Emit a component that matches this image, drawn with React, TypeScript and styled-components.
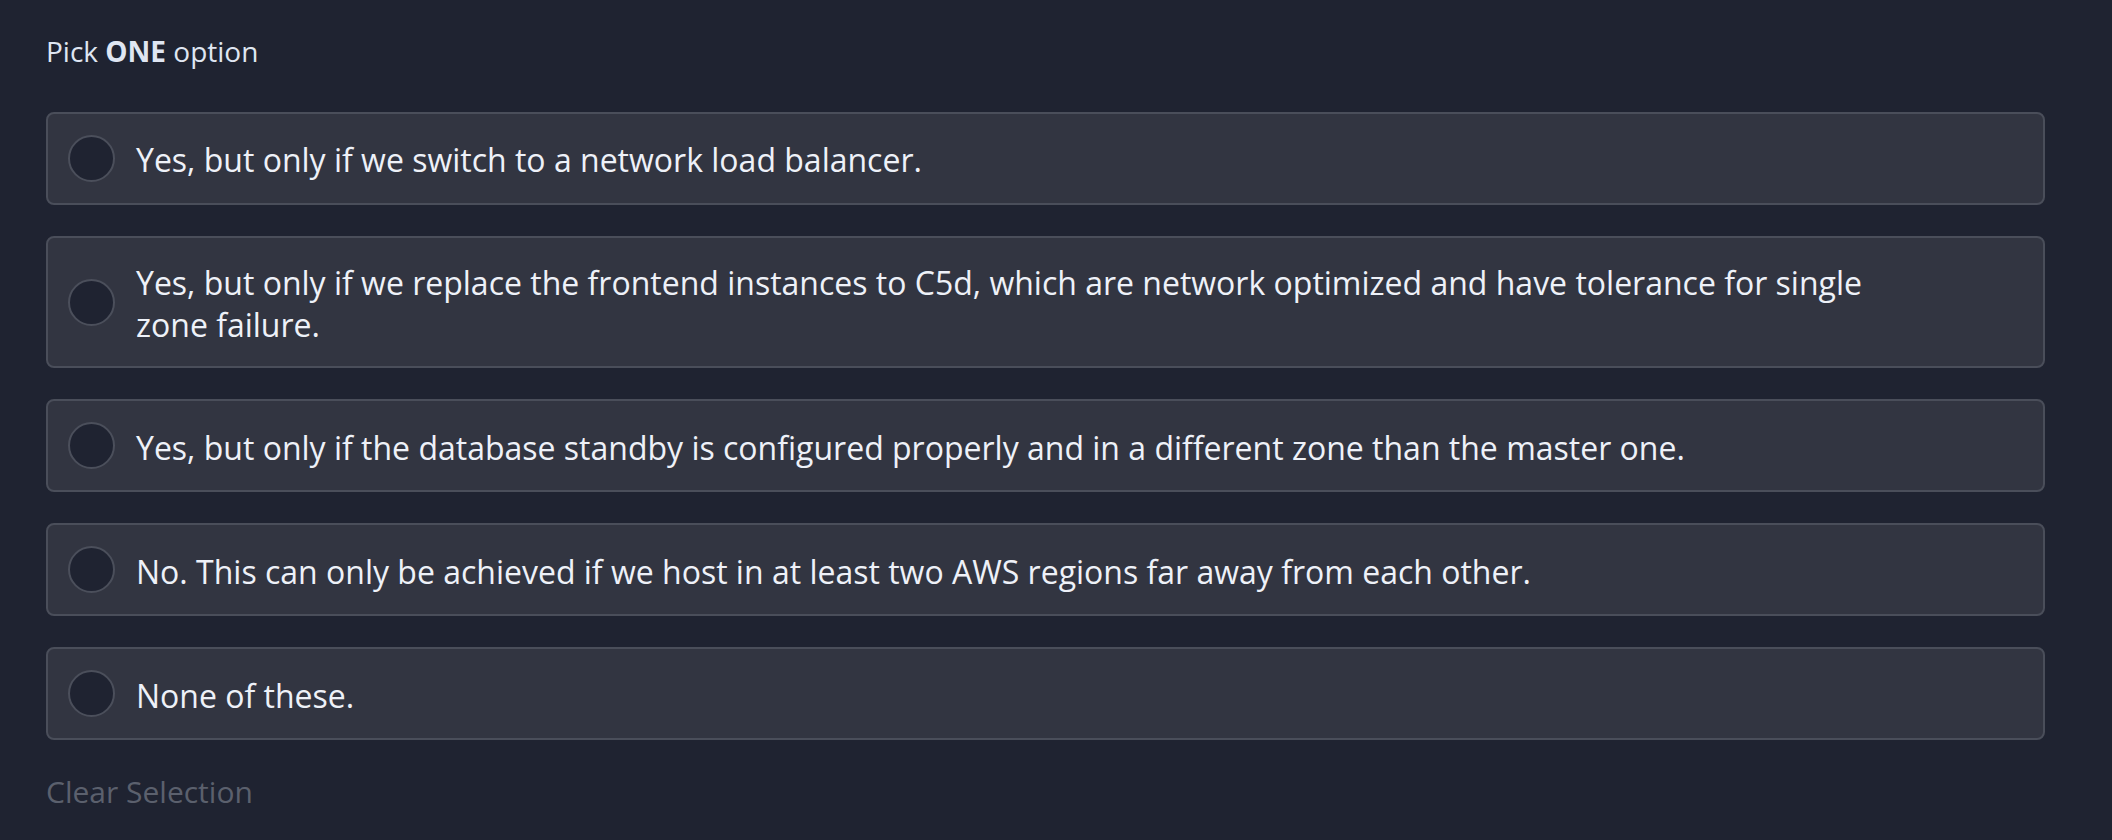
import styled, { createGlobalStyle } from 'styled-components';

const GlobalStyle = createGlobalStyle`
  html, body {
    margin: 0;
    padding: 0;
    background: #1f2331;
  }
  body {
    font-family: 'Open Sans', 'Noto Sans', sans-serif;
  }
`;

const Page = styled.div`
  padding: 32px 67px 40px 46px;
  min-height: 840px;
  box-sizing: border-box;
`;

const Prompt = styled.p`
  margin: 0 0 41px;
  font-size: 28px;
  line-height: 1.4;
  color: #dfe6f2;

  b {
    font-weight: 700;
  }
`;

const OptionList = styled.div`
  display: flex;
  flex-direction: column;
  gap: 31px;
`;

const Option = styled.label`
  display: flex;
  align-items: center;
  gap: 21px;
  padding: 21px 150px 21px 20px;
  background: #323541;
  border: 2px solid #4a4e5a;
  border-radius: 8px;
  cursor: pointer;
`;

const Radio = styled.span<{ checked?: boolean }>`
  flex: none;
  width: 47px;
  height: 47px;
  box-sizing: border-box;
  border-radius: 50%;
  border: 2px solid #4b4f5b;
  background: ${(p) => (p.checked ? '#4b4f5b' : '#1f2331')};
`;

const OptionText = styled.span`
  padding-top: 3px;
  font-size: 32px;
  line-height: 1.3;
  color: #eef1f8;
`;

const ClearButton = styled.button`
  margin-top: 31px;
  padding: 0;
  border: none;
  background: none;
  font-family: inherit;
  font-size: 30px;
  line-height: 1.4;
  color: #5b606d;
  cursor: pointer;
`;

const options = [
  'Yes, but only if we switch to a network load balancer.',
  'Yes, but only if we replace the frontend instances to C5d, which are network optimized and have tolerance for single zone failure.',
  'Yes, but only if the database standby is configured properly and in a different zone than the master one.',
  'No. This can only be achieved if we host in at least two AWS regions far away from each other.',
  'None of these.',
];

export default function App() {
  return (
    <>
      <GlobalStyle />
      <Page>
        <Prompt>
          Pick <b>ONE</b> option
        </Prompt>
        <OptionList>
          {options.map((text) => (
            <Option key={text}>
              <Radio />
              <OptionText>{text}</OptionText>
            </Option>
          ))}
        </OptionList>
        <ClearButton>Clear Selection</ClearButton>
      </Page>
    </>
  );
}
